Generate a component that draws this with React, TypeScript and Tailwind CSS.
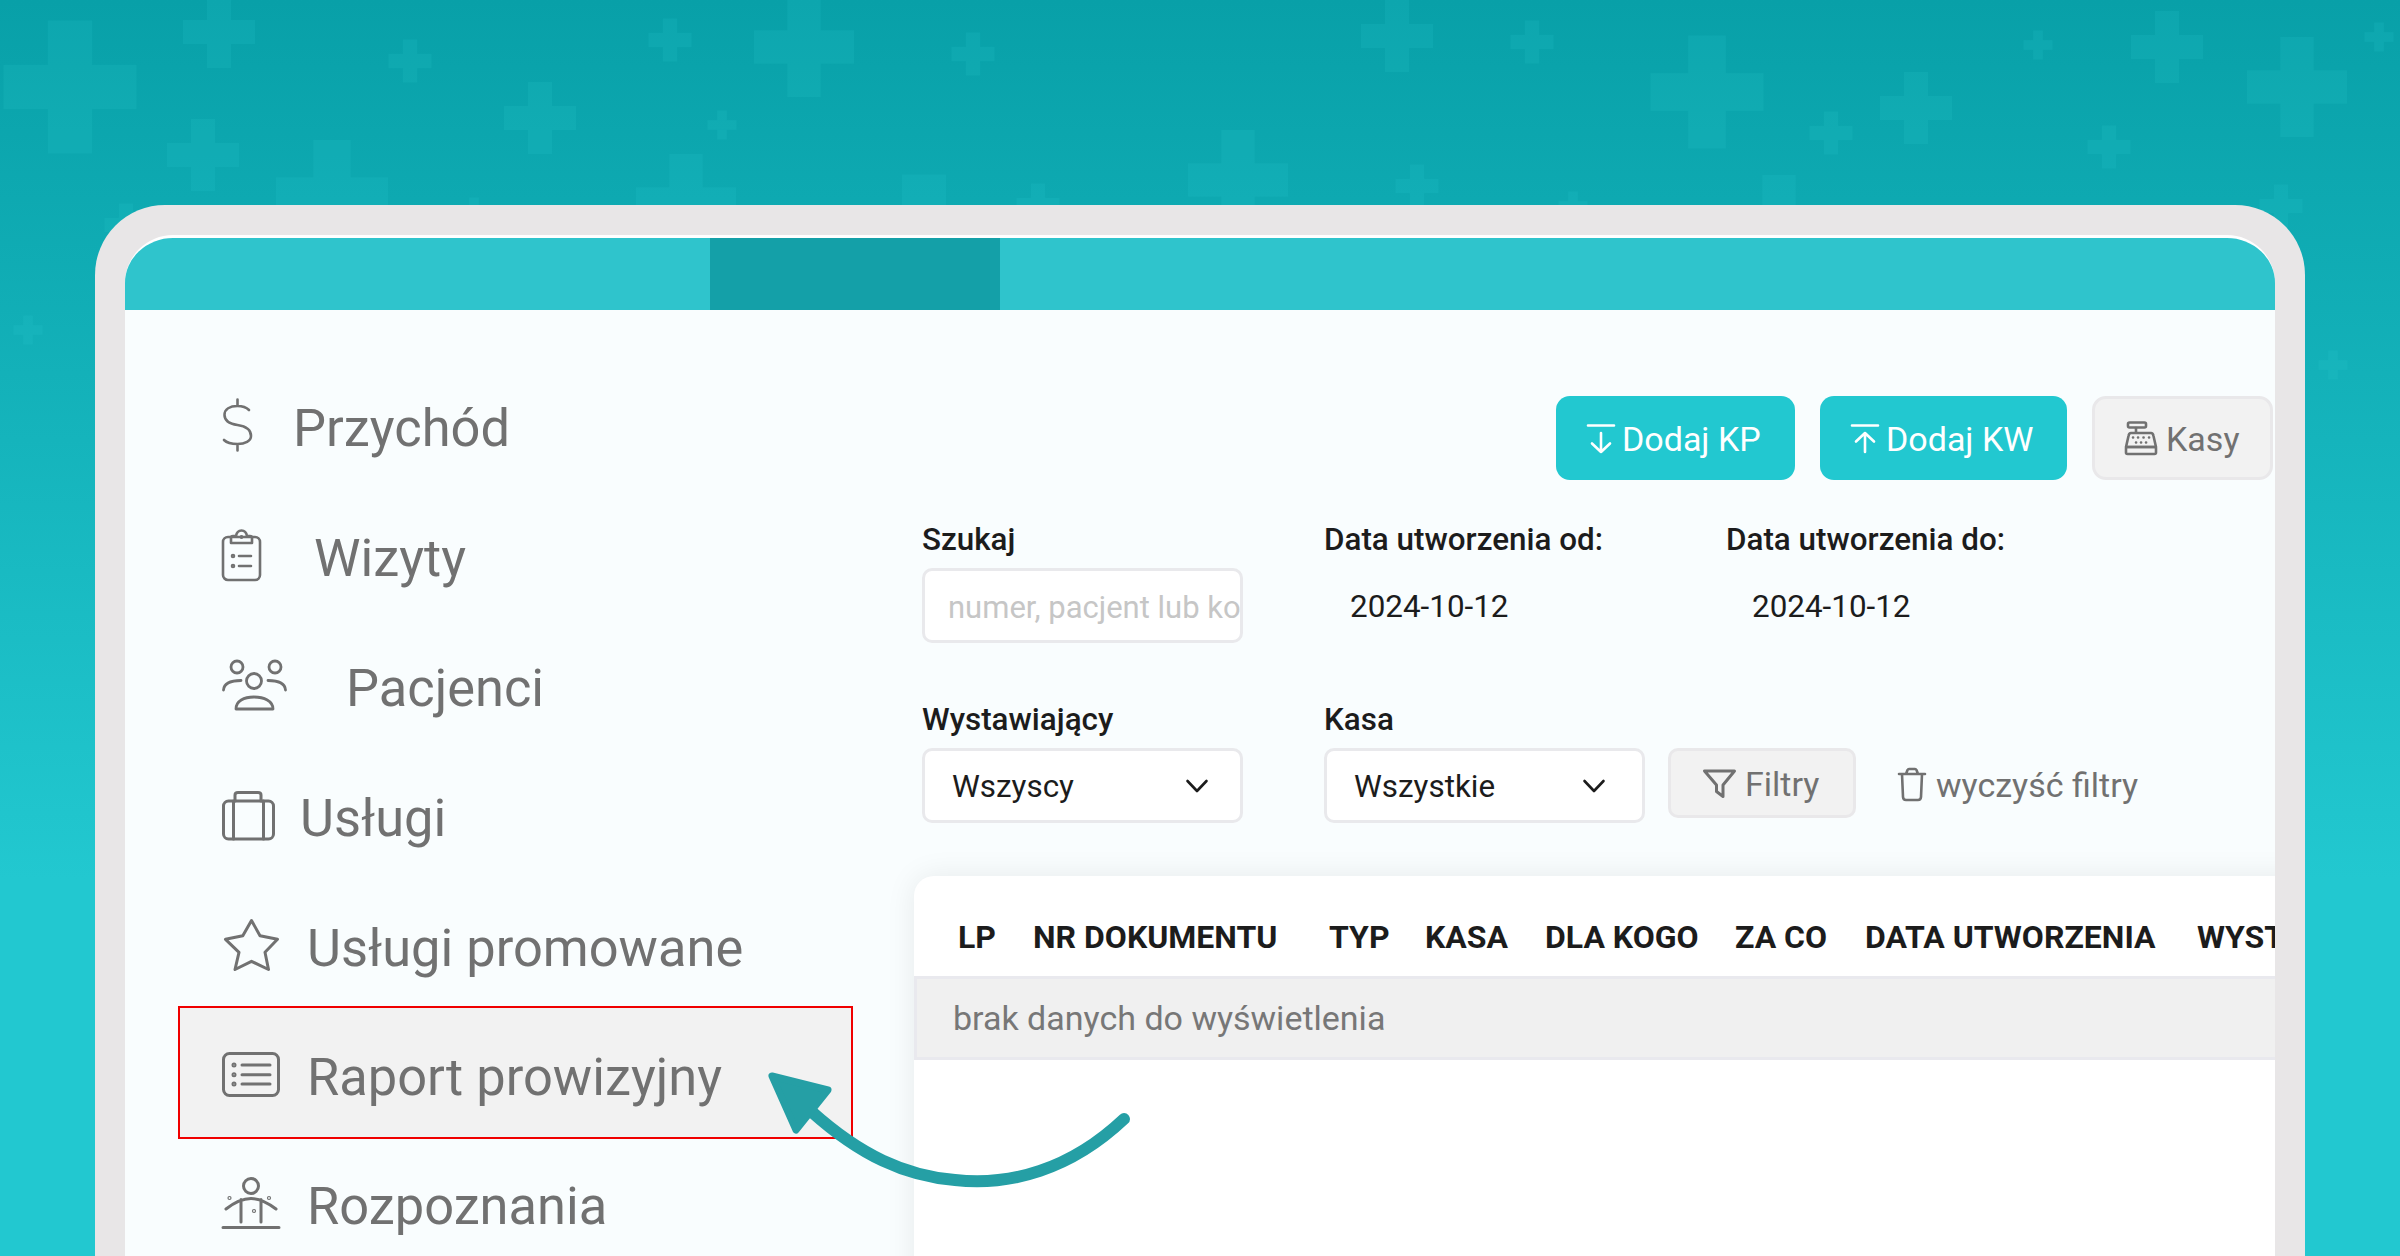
import { ReactNode } from 'react'

const crosses = [
  [70, 87, 133], [219, 32, 72], [410, 61, 43], [670, 40, 43], [804, 47, 100], [973, 54, 43],
  [540, 118, 72], [722, 125, 29], [203, 155, 72], [332, 196, 112], [686, 204, 100], [924, 241, 133],
  [1038, 205, 43], [474, 212, 29], [1238, 180, 100], [126, 225, 43], [28, 330, 29],
  [1397, 36, 72], [1532, 42, 43], [1707, 92, 113], [1916, 108, 72], [1831, 133, 43], [2038, 45, 29],
  [2167, 47, 72], [2297, 87, 100], [2109, 147, 43], [2379, 37, 29], [1417, 186, 43], [1573, 206, 29],
  [1779, 225, 100], [2281, 206, 43], [2333, 365, 29],
]

function Icon({ w, h, width = 3, children }: { w: number; h: number; width?: number; children: ReactNode }) {
  return (
    <svg width={w} height={h} viewBox={`0 0 ${w} ${h}`} fill="none" stroke="currentColor" strokeWidth={width} strokeLinecap="round" strokeLinejoin="round" className="shrink-0 overflow-visible">
      {children}
    </svg>
  )
}

const DollarIcon = () => (
  <Icon w={31} h={52} width={2.6}>
    <path d="M27 11 C24 8 20 7 15.5 7 C8 7 2.5 10 2.5 16 C2.5 22 9 25 15.5 26 C22 27 29 30 29 37 C29 42 23 45 15.5 45 C10 45 5 44 2 41 M15.5 0.5 V7 M15.5 45 V51.5" />
  </Icon>
)

const ClipboardIcon = () => (
  <Icon w={39} h={52} width={2.6}>
    <rect x="1" y="8" width="37" height="43" rx="5" />
    <path d="M9 14 V9 Q9 7 11 7 H14 Q15 1.5 19.5 1.5 Q24 1.5 25 7 H28 Q30 7 30 9 V14 Z" />
    <path d="M17 27 H29 M17 37 H29" />
    <circle cx="19.5" cy="8" r="0.6" />
    <circle cx="11" cy="27" r="1" />
    <circle cx="11" cy="37" r="1" />
  </Icon>
)

const PeopleIcon = () => (
  <Icon w={65} h={52} width={2.8}>
    <circle cx="15" cy="8" r="6" />
    <circle cx="53" cy="8" r="6" />
    <circle cx="32" cy="22" r="7.5" />
    <path d="M1.5 31 C2 25 8 21.5 19 21.5 M63.5 31 C63 25 57 21.5 46 21.5" />
    <path d="M14 50 C14 42 22 38 32 38 C42 38 51 42 51 50 Z" />
  </Icon>
)

const CaseIcon = () => (
  <Icon w={53} h={49}>
    <rect x="1.5" y="10" width="50" height="38" rx="5" />
    <path d="M13 10 V4 Q13 1.5 16 1.5 H36 Q39 1.5 39 4 V10 M11.5 10 V48 M41.5 10 V48" />
  </Icon>
)

const StarIcon = () => (
  <Icon w={57} h={52}>
    <path d="M29.5 1.5 L38 16.7 L55.5 20.3 L43 33.3 L46.5 50.5 L29.5 42.3 L13 50.5 L17 33.3 L3.5 20.3 L20.8 16.7 Z" />
  </Icon>
)

const ListIcon = () => (
  <Icon w={58} h={45}>
    <rect x="1.5" y="1.5" width="55" height="42" rx="6" />
    <path d="M20 13 H48 M20 22.7 H48 M20 32 H48" />
    <circle cx="12" cy="13" r="1" />
    <circle cx="12" cy="22.7" r="1" />
    <circle cx="12" cy="32" r="1" />
  </Icon>
)

const PersonIcon = () => (
  <Icon w={58} h={52}>
    <circle cx="29" cy="9" r="7.5" />
    <path d="M4 32 C13 25 20 21.5 29 21.5 C38 21.5 45 25 54 32 M19 22.5 V45 M39 22.5 V45 M1 50.5 H57" />
    <circle cx="7.5" cy="21" r="0.6" />
    <circle cx="47" cy="21" r="0.6" />
    <circle cx="32" cy="34" r="0.6" />
  </Icon>
)

const RegisterIcon = () => (
  <Icon w={32} h={34} width={2.6}>
    <rect x="3" y="1.5" width="18" height="5" rx="1.5" />
    <path d="M11 7 V12 M6 12 H26 Q28 12 28.5 15 L31 26 H1 L3.5 15 Q4 12 6 12 Z" />
    <rect x="1" y="26" width="30" height="7" rx="1.5" />
    <path d="M8 16.5 H8.1 M13 16.5 H13.1 M18.5 16.5 H18.6 M24 16.5 H24.1 M11 21.5 H11.1 M16 21.5 H16.1 M21 21.5 H21.1" />
  </Icon>
)

const FunnelIcon = () => (
  <Icon w={33} h={29}>
    <path d="M1.5 2 H31.5 L20 16 V27.5 L13.5 22.5 V16 Z" />
  </Icon>
)

const TrashIcon = () => (
  <Icon w={28} h={33} width={2.6}>
    <path d="M1 6 H27 M8 6 L9.5 2 Q10 1 11 1 H17 Q18 1 18.5 2 L20 6 M4 6 L5 29 Q5.2 32 8 32 H20 Q22.8 32 23 29 L24 6" />
  </Icon>
)

const Chevron = () => (
  <Icon w={22} h={12} width={2.6}>
    <path d="M1.5 1 L11 11 L20.5 1" />
  </Icon>
)

const menu = [
  { label: 'Przychód', icon: <DollarIcon />, gap: 'gap-[40px]' },
  { label: 'Wizyty', icon: <ClipboardIcon />, gap: 'gap-[53px]' },
  { label: 'Pacjenci', icon: <PeopleIcon />, gap: 'gap-[59px]' },
  { label: 'Usługi', icon: <CaseIcon />, gap: 'gap-[25px]' },
  { label: 'Usługi promowane', icon: <StarIcon />, gap: 'gap-[28px]' },
  { label: 'Raport prowizyjny', icon: <ListIcon />, gap: 'gap-[27px]', active: true },
  { label: 'Rozpoznania', icon: <PersonIcon />, gap: 'gap-[27px]' },
]

const columns = [
  { label: 'LP', w: 'w-[75px]' },
  { label: 'NR DOKUMENTU', w: 'w-[296px]' },
  { label: 'TYP', w: 'w-[96px]' },
  { label: 'KASA', w: 'w-[120px]' },
  { label: 'DLA KOGO', w: 'w-[190px]' },
  { label: 'ZA CO', w: 'w-[130px]' },
  { label: 'DATA UTWORZENIA', w: 'w-[332px]' },
  { label: 'WYSTAWIAJĄCY', w: 'w-[300px]' },
]

function Label({ children }: { children: ReactNode }) {
  return <div className="mb-[11px] h-[36px] text-[31.4px] leading-[38px] font-medium text-[#1c1c1c]">{children}</div>
}

function Select({ value, className }: { value: string; className: string }) {
  return (
    <div className={`flex h-[75px] items-center justify-between rounded-[10px] border-[3px] border-[#e9e9ec] bg-white text-[31.4px] text-[#1c1c1c] ${className}`}>
      <span className="pt-[2px]">{value}</span>
      <Chevron />
    </div>
  )
}

export default function App() {
  return (
    <div className="relative h-[1256px] overflow-hidden bg-[linear-gradient(180deg,#08a0a8_0%,#22c8d0_70%)] px-[95px] pt-[205px] font-['Roboto',sans-serif]">
      <svg width="2400" height="420" className="absolute top-0 left-0 fill-[#2fd0d4] opacity-[0.14]">
        {crosses.map(([x, y, s], i) => (
          <g key={i}>
            <rect x={x - s / 6} y={y - s / 2} width={s / 3} height={s} />
            <rect x={x - s / 2} y={y - s / 6} width={s} height={s / 3} />
          </g>
        ))}
      </svg>

      <div className="relative rounded-t-[70px] bg-[#e8e6e7] px-[30px] pt-[30px]">
        <div className="h-[1021px] overflow-hidden rounded-t-[48px] border-t-[3px] border-white bg-[#f9fdfe]">
          <div className="flex h-[72px] bg-[#2fc4cc] pl-[585px]">
            <div className="w-[290px] bg-[#14a0a8]" />
          </div>

          <div className="flex">
            <nav className="w-[789px] shrink-0 pt-[50px] pl-[53px] text-[#717171]">
              {menu.map((item) =>
                item.active ? (
                  <div key={item.label} className={`-mt-[4px] -mb-[1px] flex h-[133px] w-[675px] items-center border-2 border-[#f00000] bg-[#f2f2f2] pt-[4px] pl-[42px] text-[52.4px] ${item.gap}`}>
                    {item.icon}
                    <span className="pt-[6px]">{item.label}</span>
                  </div>
                ) : (
                  <div key={item.label} className={`flex h-[130px] items-center pl-[44px] text-[52.4px] ${item.gap}`}>
                    {item.icon}
                    <span className="pt-[6px]">{item.label}</span>
                  </div>
                ),
              )}
            </nav>

            <main className="min-w-0 flex-1 pt-[86px]">
              <div className="flex justify-end gap-[25px] pr-[2px] text-[34px]">
                <button className="flex h-[84px] w-[239px] items-center gap-[8px] rounded-[14px] bg-[#22c8d0] pl-[32px] text-white">
                  <Icon w={26} h={29} width={2.6}><path d="M0 1.5 H26 M13 9 V28 M4 19.5 L13 28 L22 19.5" /></Icon>
                  <span className="pt-[2px]">Dodaj KP</span>
                </button>
                <button className="flex h-[84px] w-[247px] items-center gap-[8px] rounded-[14px] bg-[#22c8d0] pl-[32px] text-white">
                  <Icon w={26} h={29} width={2.6}><path d="M0 1.5 H26 M13 9 V28 M4 17.5 L13 9 L22 17.5" /></Icon>
                  <span className="pt-[2px]">Dodaj KW</span>
                </button>
                <button className="flex h-[84px] w-[181px] items-center gap-[9px] rounded-[14px] border-[3px] border-[#e9e8ea] bg-[#f2f2f2] pl-[30px] text-[#717171]">
                  <RegisterIcon />
                  <span className="pt-[2px]">Kasy</span>
                </button>
              </div>

              <div className="mt-[41px] flex pl-[8px] text-[#1c1c1c]">
                <div className="w-[402px]">
                  <Label>Szukaj</Label>
                  <input readOnly placeholder="numer, pacjent lub kod" className="h-[75px] w-[321px] rounded-[10px] border-[3px] border-[#e9e9ec] bg-white pt-[3px] pl-[23px] text-[31px] outline-none placeholder:text-[#c6c6c6]" />
                </div>
                <div className="w-[402px]">
                  <Label>Data utworzenia od:</Label>
                  <div className="flex h-[75px] items-center pt-[3px] pl-[26px] text-[31.4px]">2024-10-12</div>
                </div>
                <div>
                  <Label>Data utworzenia do:</Label>
                  <div className="flex h-[75px] items-center pt-[3px] pl-[26px] text-[31.4px]">2024-10-12</div>
                </div>
              </div>

              <div className="mt-[58px] flex items-start pl-[8px]">
                <div className="w-[402px]">
                  <Label>Wystawiający</Label>
                  <Select value="Wszyscy" className="w-[321px] pr-[32px] pl-[27px]" />
                </div>
                <div className="w-[344px]">
                  <Label>Kasa</Label>
                  <Select value="Wszystkie" className="w-[321px] pr-[37px] pl-[27px]" />
                </div>
                <div className="mt-[47px] flex items-center text-[34px] text-[#717171]">
                  <button className="flex h-[70px] w-[188px] items-center gap-[9px] rounded-[10px] border-[3px] border-[#e9e8ea] bg-[#f2f2f2] pl-[32px]">
                    <FunnelIcon />
                    <span className="pt-[2px]">Filtry</span>
                  </button>
                  <div className="ml-[42px] flex items-center gap-[10px] pt-[2px]">
                    <TrashIcon />
                    <span className="pt-[2px]">wyczyść filtry</span>
                  </div>
                </div>
              </div>

              <div className="mt-[53px] h-[600px] w-[1500px] rounded-tl-[20px] bg-white shadow-[0_0_30px_rgba(0,0,0,0.08)]">
                <div className="flex h-[103px] items-center border-b-[3px] border-[#e9e9ee] pt-[22px] pl-[44px] text-[32px] font-bold whitespace-nowrap text-[#1c1c1c]">
                  {columns.map((col) => (
                    <div key={col.label} className={`shrink-0 ${col.w}`}>
                      {col.label}
                    </div>
                  ))}
                </div>
                <div className="flex h-[81px] items-center border-b-[3px] border-l-[3px] border-[#e9e9ee] bg-[#f0f0f0] pt-[1px] pl-[36px] text-[34px] text-[#777777]">
                  brak danych do wyświetlenia
                </div>
              </div>
            </main>
          </div>
        </div>
      </div>

      <svg width="400" height="130" viewBox="760 1060 400 130" className="absolute top-[1060px] left-[760px]">
        <path d="M1124 1119 C1070 1170 1010 1186 955 1180 C905 1176 860 1155 812 1112" fill="none" stroke="#259fa5" strokeWidth="12" strokeLinecap="round" />
        <path d="M772 1076 L828 1090 L796 1130 Z" fill="#259fa5" stroke="#259fa5" strokeWidth="7" strokeLinejoin="round" />
      </svg>
    </div>
  )
}
